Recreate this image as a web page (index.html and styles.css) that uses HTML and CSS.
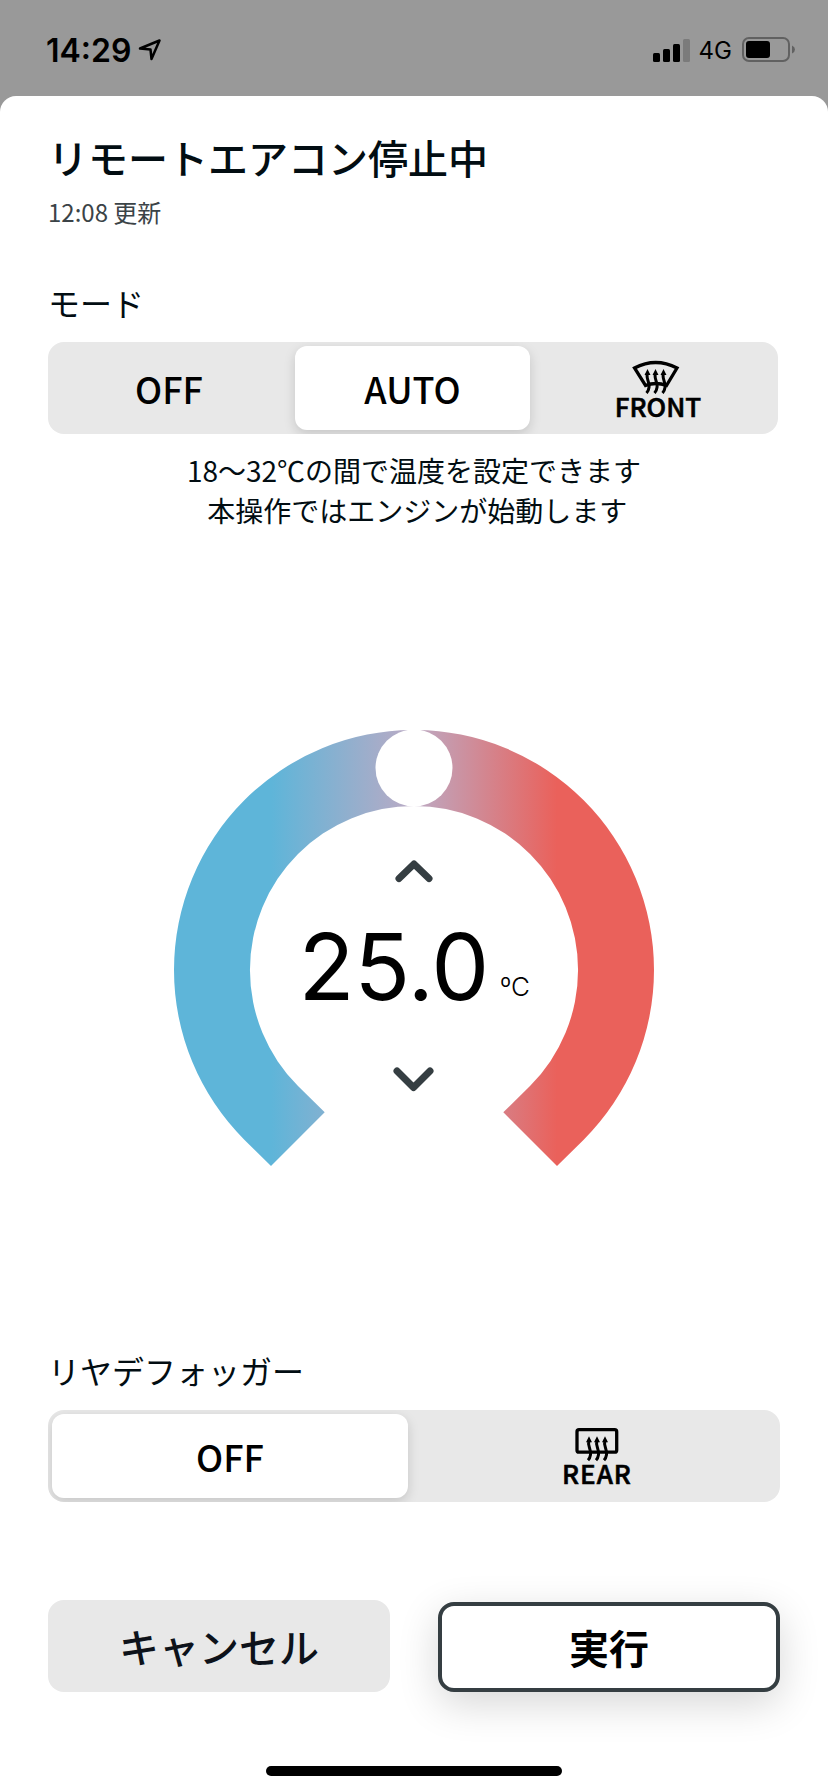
FILE: index.html
```html
<!DOCTYPE html>
<html lang="ja">

<head>
    <meta charset="utf-8">
    <title>リモートエアコン</title>
    <link rel="stylesheet" href="styles.css">
</head>

<body>
    <div class="status-bar">
        <span class="time">14:29</span>
        <svg class="location" width="24" height="24" viewBox="0 0 24 24">
            <path d="M2 10.5 L21.5 2.5 L13.5 21 L12.5 11.5 Z" />
        </svg>
        <div class="status-right">
            <svg class="signal" width="37" height="23" viewBox="0 0 37 23">
                <rect x="0" y="14" width="7" height="9" rx="1.5" />
                <rect x="10" y="10" width="7" height="13" rx="1.5" />
                <rect x="20" y="5" width="7" height="18" rx="1.5" />
                <rect class="dim" x="30" y="0" width="7" height="23" rx="1.5" />
            </svg>
            <span class="network">4G</span>
            <svg class="battery" width="54" height="26" viewBox="0 0 54 26">
                <rect class="shell" x="1" y="1" width="46" height="23" rx="6" />
                <rect x="4" y="4" width="24" height="17" rx="3" />
                <path class="tip" d="M50 8.5 Q53 10 53 12.5 Q53 15 50 16.5 Z" />
            </svg>
        </div>
    </div>

    <div class="sheet">
        <h1>リモートエアコン停止中</h1>
        <p class="updated">12:08 更新</p>

        <h2>モード</h2>
        <div class="segment mode">
            <button class="off">OFF</button>
            <button class="selected">AUTO</button>
            <button class="with-icon front">
                <svg width="48" height="34" viewBox="0 0 48 34">
                    <path class="line" d="M2.5 8 Q23.700 -3 45 8 L34.500 25.500 Q24 21.500 13.500 25.500 Z" />
                    <g id="heat">
                        <path class="flow" d="M15.500 13 C13.500 19 18 21.500 17 27.500 Q16.500 31 14.500 33" />
                        <path class="flow" d="M23.500 13 C21.500 19 26 21.500 25 27.500 Q24.500 31 22.500 33" />
                        <path class="flow" d="M31.500 13 C29.500 19 34 21.500 33 27.500 Q32.500 31 30.500 33" />
                        <path d="M15.500 9 l3 6 h-6z M23.500 9 l3 6 h-6z M31.500 9 l3 6 h-6z" />
                    </g>
                </svg>
                <span>FRONT</span>
            </button>
        </div>
        <p class="note">18〜32℃の間で温度を設定できます<br>&nbsp;本操作ではエンジンが始動します</p>

        <div class="dial">
            <svg class="ring" width="480" height="460" viewBox="0 0 480 460">
                <defs>
                    <linearGradient id="temp" gradientUnits="userSpaceOnUse" x1="97" y1="0" x2="383" y2="0">
                        <stop offset="0" stop-color="#5eb5d9" />
                        <stop offset="0.5" stop-color="#bcaac4" />
                        <stop offset="1" stop-color="#ea615b" />
                    </linearGradient>
                </defs>
                <path fill="url(#temp)" d="M97 436 L70.300 409.700 A240 240 0 1 1 409.700 409.700 L383 436 L329.300 382.300 L356 356 A164 164 0 1 0 124 356 L150.700 382.300 Z" />
                <circle cx="240" cy="38" r="38.500" fill="#fff" />
            </svg>
            <div class="readout">
                <svg class="arrow" width="38" height="24" viewBox="0 0 38 24">
                    <path d="M4 18.500 L19 4 L34 18.500" />
                </svg>
                <div class="temperature">25.0<span class="unit">ºC</span></div>
                <svg class="arrow" width="42" height="26" viewBox="0 0 42 26">
                    <path d="M4 4 L20.500 20.500 L37 4" />
                </svg>
            </div>
        </div>

        <h2>リヤデフォッガー</h2>
        <div class="segment defogger">
            <button class="selected">OFF</button>
            <button class="with-icon rear">
                <svg width="48" height="34" viewBox="0 0 48 34">
                    <rect class="line" x="4" y="1.700" width="39.700" height="22.500" rx="2" />
                    <use href="#heat" x="0.500" y="-0.800" />
                </svg>
                <span>REAR</span>
            </button>
        </div>

        <div class="actions">
            <button class="cancel">キャンセル</button>
            <button class="run">実行</button>
        </div>
        <div class="home-indicator"></div>
    </div>
</body>

</html>
```

FILE: styles.css
```css
body {
    margin: 0;
    width: 828px;
    height: 1792px;
    overflow: hidden;
    background-color: #999999;
    color: #020d12;
    font-family: "Noto Sans CJK JP", sans-serif;
}

h1, h2, p {
    margin: 0;
}

button {
    border: none;
    padding: 0;
    background: none;
    color: #000;
    font-family: inherit;
}

.status-bar {
    box-sizing: border-box;
    display: flex;
    align-items: center;
    height: 96px;
    padding: 4px 32px 0 46px;
    color: #000;
    font-family: Inter, sans-serif;
}

.time {
    font-size: 32px;
    font-weight: 600;
}

.location {
    margin-left: 7px;
    fill: none;
    stroke: #000;
    stroke-width: 2.5;
    stroke-linejoin: round;
}

.status-right {
    display: flex;
    align-items: center;
    margin-left: auto;
}

.dim {
    fill: #7b7b7b;
}

.network {
    margin: 0 10px 0 9px;
    font-size: 24px;
}

.shell {
    fill: none;
    stroke: #616161;
    stroke-width: 2;
}

.tip {
    fill: #616161;
}

.sheet {
    box-sizing: border-box;
    height: 1696px;
    padding: 31px 48px 0;
    background-color: #fff;
    border-radius: 16px 16px 0 0;
}

h1 {
    font-size: 40px;
    font-weight: 500;
    line-height: 60px;
}

.updated {
    margin-top: 7px;
    color: #3b4347;
    font-size: 24px;
    line-height: 36px;
}

h2 {
    margin-bottom: 16px;
    font-size: 32px;
    font-weight: 400;
    line-height: 48px;
}

.updated + h2 {
    margin-top: 48px;
}

.segment {
    box-sizing: border-box;
    display: grid;
    height: 92px;
    padding: 4px;
    background-color: #e8e8e8;
    border-radius: 16px;
    overflow: hidden;
}

.segment button {
    font-size: 36px;
    font-weight: 500;
    border-radius: 12px;
}

.segment .selected {
    background-color: #fff;
    box-shadow: 0 4px 12px rgba(0, 0, 0, 0.15);
}

.segment .off {
    padding-right: 9px;
}

.mode {
    grid-template-columns: 243px 235px 1fr;
    width: 730px;
}

.defogger {
    grid-template-columns: 356px 1fr;
}

.with-icon {
    display: flex;
    flex-direction: column;
    align-items: center;
    padding-top: 14px;
}

.with-icon span {
    margin-top: -2px;
    font-size: 26px;
    font-weight: 500;
    line-height: 28px;
    -webkit-text-stroke: 0.6px #000;
}

.front {
    padding-left: 8px;
}

.front span {
    margin-left: 4px;
}

.rear {
    padding-left: 10px;
}

.rear span {
    margin-top: -3px;
    letter-spacing: 1px;
}

.line {
    fill: none;
    stroke: #000;
    stroke-width: 3.3;
}

.flow {
    fill: none;
    stroke: #000;
    stroke-width: 3;
}

.note {
    margin-top: 16px;
    font-size: 28px;
    line-height: 40px;
    text-align: center;
}

.dial {
    display: grid;
    justify-content: center;
    height: 460px;
    margin: 200px 0 156px;
}

.ring, .readout {
    grid-area: 1 / 1;
}

.readout {
    display: flex;
    flex-direction: column;
    align-items: center;
    padding-top: 130px;
    z-index: 1;
}

.arrow {
    fill: none;
    stroke: #353e42;
    stroke-width: 7;
    stroke-linecap: round;
    stroke-linejoin: round;
}

.temperature {
    height: 120px;
    margin: 23px 0 40px;
    color: #000;
    font-family: Inter, sans-serif;
    font-size: 92px;
    letter-spacing: -0.3px;
    line-height: 120px;
}

.unit {
    margin-left: 11px;
    font-size: 26px;
    font-weight: 300;
    line-height: 1;
    vertical-align: 4px;
}

.actions {
    display: grid;
    grid-template-columns: 342px 342px;
    gap: 48px;
    align-items: end;
    height: 92px;
    margin-top: 98px;
}

.actions button {
    height: 92px;
    border-radius: 16px;
    font-size: 40px;
}

.actions .cancel {
    background-color: #e8e8e8;
    color: #0d121a;
    font-weight: 500;
}

.actions .run {
    height: 90px;
    border: 4px solid #353e42;
    background-color: #fff;
    font-weight: 700;
    box-shadow: 0 12px 40px rgba(0, 0, 0, 0.16);
}

.home-indicator {
    width: 296px;
    height: 10px;
    margin: 74px auto 0;
    background-color: #000;
    border-radius: 5px;
}
```
